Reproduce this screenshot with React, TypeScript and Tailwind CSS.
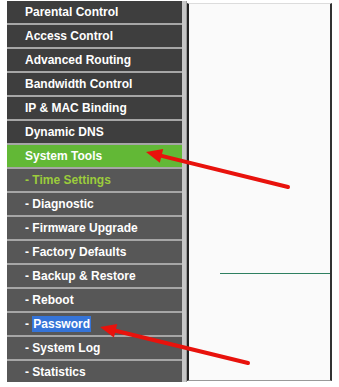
const mainItems = ['Parental Control', 'Access Control', 'Advanced Routing', 'Bandwidth Control', 'IP & MAC Binding', 'Dynamic DNS'];
const subItems = ['Time Settings', 'Diagnostic', 'Firmware Upgrade', 'Factory Defaults', 'Backup & Restore', 'Reboot', 'Password', 'System Log', 'Statistics'];

const Arrow = ({ x1, y1, x2, y2 }: { x1: number; y1: number; x2: number; y2: number }) => {
  const a = Math.atan2(y2 - y1, x2 - x1);
  const len = 16;
  const w = 7;
  const bx = x2 - Math.cos(a) * len;
  const by = y2 - Math.sin(a) * len;
  const px = -Math.sin(a) * w;
  const py = Math.cos(a) * w;
  return (
    <g>
      <line x1={x1} y1={y1} x2={bx} y2={by} stroke="#e8120c" strokeWidth="4" strokeLinecap="round" />
      <polygon points={`${x2},${y2} ${bx + px},${by + py} ${bx - px},${by - py}`} fill="#e8120c" />
    </g>
  );
};

const App = () => {
  return (
    <div className="relative w-[339px] h-[387px] bg-white overflow-hidden" style={{ fontFamily: '"Liberation Sans", Arial, sans-serif' }}>
      <div className="flex pl-[7px] pt-[1px]">
        {/* menu */}
        <div className="flex flex-col w-[175px]">
          {mainItems.map((t) => (
            <div key={t} className="h-[24px] border-b-2 border-[#a6a6a6] bg-[#3e3e3e] pl-[18px] flex items-center text-[12px] font-bold text-white">
              {t}
            </div>
          ))}
          <div className="h-[24px] border-b-2 border-[#a6a6a6] bg-[#62b836] pl-[18px] flex items-center text-[12px] font-bold text-white">
            System Tools
          </div>
          {subItems.map((t, i) => (
            <div
              key={t}
              className={`${i < subItems.length - 1 ? 'h-[24px] border-b-2 border-[#a6a6a6]' : 'h-[21px]'} bg-[#575757] pl-[18px] flex items-center text-[12px] font-bold ${i === 0 ? 'text-[#9ccc3c]' : 'text-white'}`}
            >
              <span>-&nbsp;</span>
              {t === 'Password' ? (
                <span className="bg-[#3574d8] text-white px-px leading-[16px]">{t}</span>
              ) : (
                <span>{t}</span>
              )}
            </div>
          ))}
        </div>
        {/* scroll strip */}
        <div className="w-[4px] bg-[#c6c6c6]" />
        <div className="w-px bg-[#9a9a9a]" />
        {/* content frame */}
        <div className="w-[145px] mt-[2px] mb-[1px] border-l-2 border-r-2 border-t border-b border-l-[#222] border-r-[#333] border-t-[#dcdcdc] border-b-[#999] bg-[#fafafa]">
          <div className="mt-[269px] ml-[31px] h-px bg-[#2e8060]" />
        </div>
      </div>
      <svg className="absolute inset-0 pointer-events-none" width="339" height="387">
        <Arrow x1={288} y1={187} x2={146} y2={152} />
        <Arrow x1={248} y1={363} x2={100} y2={327} />
      </svg>
    </div>
  );
};

export default App;
